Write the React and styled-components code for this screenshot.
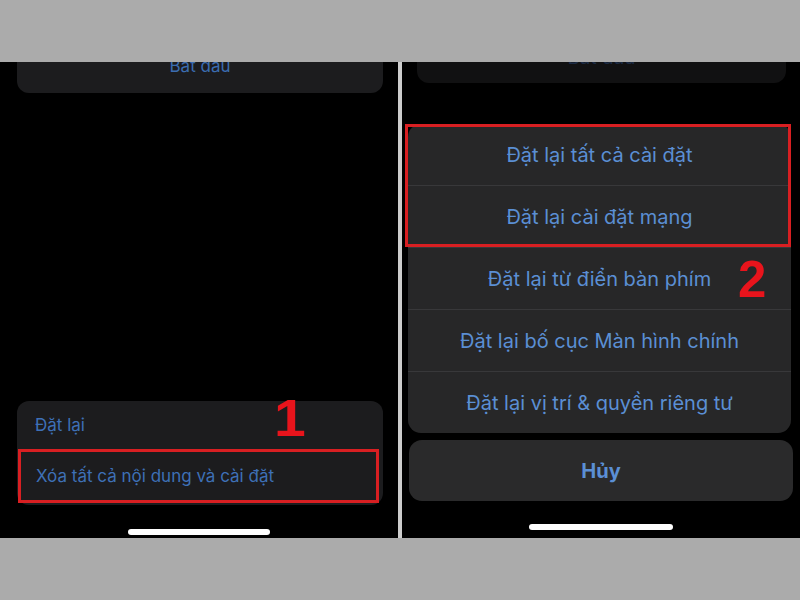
import styled, { createGlobalStyle } from 'styled-components';

const GlobalStyle = createGlobalStyle`
  body {
    margin: 0;
    background: #ababab;
    font-family: Inter, "Noto Sans", "Liberation Sans", sans-serif;
  }
`;

const Page = styled.div`
  width: 800px;
  height: 600px;
  display: flex;
  flex-direction: column;
  background: #ababab;
`;

const Band = styled.div`
  height: 62px;
  background: #ababab;
`;

const Screens = styled.div`
  height: 476px;
  display: flex;
`;

const Divider = styled.div`
  width: 4px;
  background: #cdcdcd;
`;

const Screen = styled.div`
  width: 398px;
  background: #000;
  display: flex;
  flex-direction: column;
  overflow: hidden;
`;

// the "Bắt đầu" card scrolled mostly off the top of the screen
const PeekCard = styled.div`
  height: 54px;
  margin: -23px 15px 0 17px;
  border-radius: 12px;
  background: #1c1c1e;
  color: #3b6cb0;
  display: flex;
  align-items: center;
  justify-content: center;
  font-size: 17px;
`;

// same card behind the dimmed action sheet
const DimPeekCard = styled(PeekCard)`
  height: 51px;
  margin: -30px 14px 0 15px;
  background: #111112;
  color: #1c2b44;
  font-size: 19px;
`;

const Spacer = styled.div`
  flex: 1;
`;

const Group = styled.div`
  position: relative;
  margin: 0 15px 0 17px;
  padding-bottom: 2px;
  border-radius: 12px;
  background: #1c1c1e;
`;

const ListRow = styled.div`
  height: 48px;
  display: flex;
  align-items: center;
  padding-left: 18px;
  color: #3e70b6;
  font-size: 17px;
`;

const MarkedRow = styled(ListRow)`
  height: 54px;
  box-sizing: border-box;
  margin: 0 4px 0 1px;
  padding-left: 15px;
  border: 3px solid #d81f22;
`;

const Badge = styled.div`
  position: absolute;
  left: ${p => p.$x}px;
  top: ${p => p.$y}px;
  font-family: "Liberation Sans", Arial, sans-serif;
  font-weight: 700;
  font-size: 51px;
  line-height: 51px;
  color: #e8141c;
  transform: scaleX(${p => p.$stretch || 1});
  transform-origin: left top;
`;

const HomeBar = styled.div`
  align-self: center;
  width: ${p => p.$width}px;
  height: 6px;
  border-radius: 3px;
  background: #fff;
  margin-top: ${p => p.$top}px;
  margin-bottom: ${p => p.$bottom}px;
`;

const Sheet = styled.div`
  position: relative;
  margin: 41px 9px 0 6px;
  border-radius: 13px;
  background: #272728;
`;

const Highlight = styled.div`
  outline: 3px solid #d81f22;
  outline-offset: -3px;
  margin-left: -3px;
  padding-left: 3px;
`;

const Action = styled.div`
  height: 61px;
  display: flex;
  align-items: center;
  justify-content: center;
  color: #5b8fd4;
  font-size: 20px;
  border-top: 1px solid #38383a;

  &:first-child {
    border-top: none;
  }
`;

const Cancel = styled.div`
  height: 61px;
  margin: 7px 7px 0 7px;
  border-radius: 13px;
  background: #2a2a2b;
  display: flex;
  align-items: center;
  justify-content: center;
  color: #5b8fd4;
  font-size: 20px;
  font-weight: 700;
`;

const actions = [
  'Đặt lại từ điển bàn phím',
  'Đặt lại bố cục Màn hình chính',
  'Đặt lại vị trí & quyền riêng tư',
];

function LeftScreen() {
  return (
    <Screen>
      <PeekCard>Bắt đầu</PeekCard>
      <Spacer />
      <Group>
        <ListRow>Đặt lại</ListRow>
        <MarkedRow>Xóa tất cả nội dung và cài đặt</MarkedRow>
        <Badge $x={257} $y={-8} $stretch={1.12}>1</Badge>
      </Group>
      <HomeBar $width={142} $top={24} $bottom={3} />
    </Screen>
  );
}

function RightScreen() {
  return (
    <Screen>
      <DimPeekCard>Bắt đầu</DimPeekCard>
      <Sheet>
        <Highlight>
          <Action>Đặt lại tất cả cài đặt</Action>
          <Action>Đặt lại cài đặt mạng</Action>
        </Highlight>
        {actions.map(a => (
          <Action key={a}>{a}</Action>
        ))}
        <Badge $x={330} $y={130}>2</Badge>
      </Sheet>
      <Cancel>Hủy</Cancel>
      <HomeBar $width={144} $top={23} $bottom={8} />
    </Screen>
  );
}

export default function App() {
  return (
    <Page>
      <GlobalStyle />
      <Band />
      <Screens>
        <LeftScreen />
        <Divider />
        <RightScreen />
      </Screens>
      <Band />
    </Page>
  );
}
